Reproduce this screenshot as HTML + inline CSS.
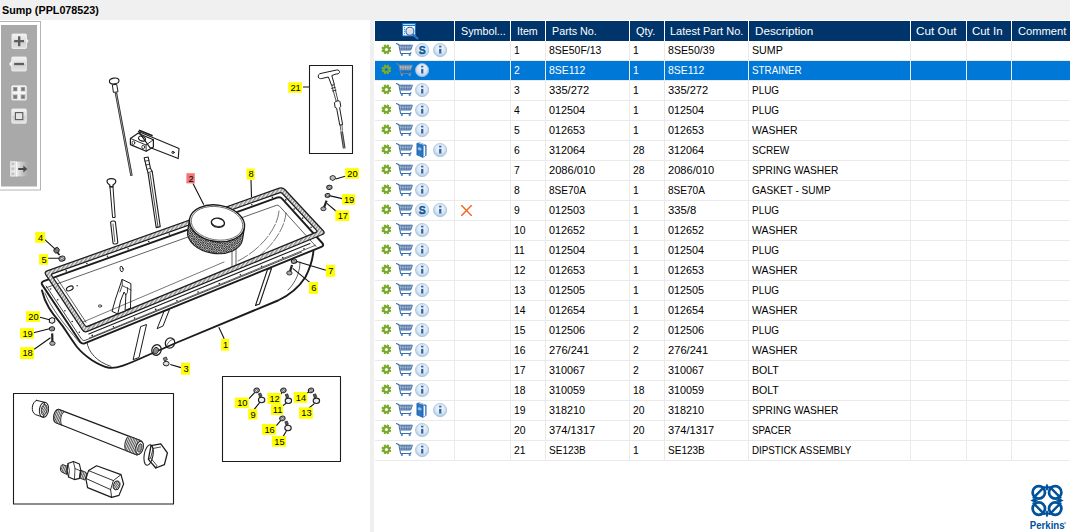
<!DOCTYPE html>
<html><head><meta charset="utf-8"><title>Sump (PPL078523)</title>
<style>
html,body{margin:0;padding:0}
body{width:1070px;height:532px;background:#f0f0f0;position:relative;overflow:hidden;font-family:"Liberation Sans",sans-serif;font-size:11px;color:#000}
.abs{position:absolute}
#title{left:2px;top:3px;font-weight:bold;font-size:11px;line-height:14px;white-space:nowrap;transform:scaleX(.978);transform-origin:0 50%}
#lp{left:0;top:20px;width:370px;height:512px;background:#fff}
#rp{left:374px;top:20px;width:696px;height:512px;background:#fff}
#hd{left:375px;top:21px;width:695px;height:20px;background:#00356b}
.hs{position:absolute;top:21px;width:1px;height:20px;background:#fff}
.ht{position:absolute;top:21px;height:20px;line-height:20px;color:#fff;font-size:11.5px;white-space:nowrap;transform-origin:0 50%}
.vs{position:absolute;top:41px;width:1px;height:420px;background:#eaeaea}
.hl{position:absolute;left:375px;width:695px;height:1px;background:#eaeaea}
.row{position:absolute;left:375px;width:695px;height:19px}
.sel{background:#0078d7;color:#fff}
.c{position:absolute;top:0;height:19px;line-height:19px;white-space:nowrap;font-size:11px}
.d{display:inline-block;transform-origin:0 50%}
.ic{position:absolute}
</style></head><body>
<div id="title" class="abs">Sump (PPL078523)</div>
<div id="lp" class="abs"></div>
<div id="rp" class="abs"></div>
<svg width="0" height="0" style="position:absolute">
<defs>
<radialGradient id="gi" cx="50%" cy="40%" r="60%"><stop offset="0" stop-color="#f4f8fc"/><stop offset=".55" stop-color="#dde9f4"/><stop offset="1" stop-color="#a9c6e2"/></radialGradient>
<linearGradient id="gb" x1="0" y1="0" x2="1" y2="0"><stop offset="0" stop-color="#2468b4"/><stop offset=".5" stop-color="#2f7bc6"/><stop offset="1" stop-color="#2269b6"/></linearGradient>
<symbol id="gear" viewBox="-5.5 -5.5 11 11">
<g fill="#7aab2c" transform="rotate(22.5)"><circle r="3.7"/>
<rect x="-1.2" y="-5.1" width="2.4" height="10.2" rx=".7"/>
<rect x="-1.2" y="-5.1" width="2.4" height="10.2" rx=".7" transform="rotate(45)"/>
<rect x="-1.2" y="-5.1" width="2.4" height="10.2" rx=".7" transform="rotate(90)"/>
<rect x="-1.2" y="-5.1" width="2.4" height="10.2" rx=".7" transform="rotate(135)"/></g>
<circle r="1.55" fill="#fff"/>
</symbol>
<symbol id="gearsel" viewBox="-5.5 -5.5 11 11">
<g fill="#7aab2c" transform="rotate(22.5)"><circle r="3.7"/>
<rect x="-1.2" y="-5.1" width="2.4" height="10.2" rx=".7"/>
<rect x="-1.2" y="-5.1" width="2.4" height="10.2" rx=".7" transform="rotate(45)"/>
<rect x="-1.2" y="-5.1" width="2.4" height="10.2" rx=".7" transform="rotate(90)"/>
<rect x="-1.2" y="-5.1" width="2.4" height="10.2" rx=".7" transform="rotate(135)"/></g>
<circle r="1.55" fill="#0078d7"/>
</symbol>
<symbol id="cart" viewBox="0 0 17 14">
<g fill="none" stroke="#3f6aa3" stroke-linecap="round" stroke-linejoin="round">
<path d="M0.5 0.5 L2.9 1.7 L4.6 10.5 L14.7 10.5 L14.9 9.6" stroke-width="1.1"/>
<path d="M3.3 2.2 L16.4 2.2 L14.8 6.9 L4.6 6.9" stroke-width="1" fill="#e6edf6"/>
<path d="M5.3 2.4V6.9M7 2.4V6.9M8.7 2.4V6.9M10.4 2.4V6.9M12.1 2.4V6.9M13.8 2.4V6.9M3.6 3.8H15M3.9 5.4H14.5" stroke-width=".65"/>
</g>
<circle cx="5.9" cy="12" r="1.15" fill="#4f92da"/><circle cx="13.7" cy="12" r="1.15" fill="#4f92da"/>
</symbol>
<symbol id="cartsel" viewBox="0 0 17 14">
<g fill="none" stroke="#6c7f97" stroke-linecap="round" stroke-linejoin="round">
<path d="M0.5 0.5 L2.9 1.7 L4.6 10.5 L14.7 10.5 L14.9 9.6" stroke-width="1.1"/>
<path d="M3.3 2.2 L16.4 2.2 L14.8 6.9 L4.6 6.9" stroke-width="1" fill="#dfe6ee"/>
<path d="M5.3 2.4V6.9M7 2.4V6.9M8.7 2.4V6.9M10.4 2.4V6.9M12.1 2.4V6.9M13.8 2.4V6.9M3.6 3.8H15M3.9 5.4H14.5" stroke-width=".65"/>
</g>
<circle cx="5.9" cy="12" r="1.15" fill="#8394aa"/><circle cx="13.7" cy="12" r="1.15" fill="#8394aa"/>
</symbol>
<symbol id="info" viewBox="0 0 15 15">
<circle cx="7.5" cy="7.5" r="7" fill="url(#gi)" stroke="#a4c1de" stroke-width=".8"/>
<rect x="6.45" y="6.2" width="2.4" height="4.9" fill="#3263a6"/><rect x="6.45" y="2.9" width="2.4" height="1.8" fill="#3263a6"/>
</symbol>
<symbol id="sic" viewBox="0 0 15 15">
<circle cx="7.5" cy="7.5" r="7" fill="url(#gi)" stroke="#a4c1de" stroke-width=".8"/>
<text x="7.5" y="11.5" text-anchor="middle" font-family="Liberation Sans, sans-serif" font-weight="bold" font-size="11" fill="#0b5a98" stroke="#0b5a98" stroke-width=".45">S</text>
</symbol>
<symbol id="book" viewBox="0 0 11 16">
<path d="M0.7 1.2 L3.2 0.2 L10.5 3 L10.5 13.2 L7 15.8 L0.7 13.1 Z" fill="#1f66b2"/>
<path d="M0.7 1.2 L7 2.8 L7 15.8 L0.7 13.1 Z" fill="url(#gb)"/>
<path d="M7.5 3.3 L9.3 3.9 L9.3 13.5 L7.5 15 Z" fill="#f4f8fc"/>
<path d="M1.6 1 L3.3 0.4 L9.6 2.8 L7.4 2.7 Z" fill="#e8f0f9" opacity=".9"/>
<ellipse cx="3.7" cy="6.9" rx="2" ry="1.5" fill="#a9c9ea" opacity=".85" transform="rotate(12 3.7 6.9)"/>
</symbol>
<symbol id="xic" viewBox="0 0 11 11">
<path d="M0.6 0.6 L10.4 10.4 M10.4 0.6 L0.6 10.4" stroke="#f0671f" stroke-width="1.4" fill="none" stroke-linecap="round"/>
</symbol>
</defs></svg>
<div id="hd" class="abs"></div>
<div class="hs" style="left:454px"></div><div class="hs" style="left:510px"></div><div class="hs" style="left:545px"></div><div class="hs" style="left:629px"></div><div class="hs" style="left:664px"></div><div class="hs" style="left:748px"></div><div class="hs" style="left:910px"></div><div class="hs" style="left:966px"></div><div class="hs" style="left:1011px"></div>
<div class="ht" style="left:461px;transform:scaleX(0.933)">Symbol...</div><div class="ht" style="left:517px;transform:scaleX(0.926)">Item</div><div class="ht" style="left:551.5px;transform:scaleX(0.935)">Parts No.</div><div class="ht" style="left:635.5px;transform:scaleX(0.949)">Qty.</div><div class="ht" style="left:670.3px;transform:scaleX(0.956)">Latest Part No.</div><div class="ht" style="left:754.5px;transform:scaleX(1.014)">Description</div><div class="ht" style="left:916.4px;transform:scaleX(1.02)">Cut Out</div><div class="ht" style="left:972.4px;transform:scaleX(0.994)">Cut In</div><div class="ht" style="left:1017.6px;transform:scaleX(0.969)">Comment</div>
<svg class="abs" style="left:401px;top:22px" width="18" height="18" viewBox="401 22 18 18">
<rect x="402.1" y="23.1" width="13.8" height="13.2" fill="#1878d2"/>
<rect x="403.1" y="26" width="11.8" height="9.4" fill="#fff"/>
<rect x="403.2" y="24.1" width="11.6" height=".9" fill="#d6e9fb"/>
<path d="M404.6 27.2v7.6" stroke="#1878d2" stroke-width="1" stroke-dasharray="1 1"/>
<path d="M412.6 34.2 L417.5 38.5" stroke="#2f74c0" stroke-width="2.2" stroke-linecap="round"/>
<circle cx="409.9" cy="31.2" r="4" fill="#dedede" stroke="#2a6cb8" stroke-width="1.1"/>
<path d="M407.6 30.2a2.6 2.6 0 0 1 4-1.2" stroke="#f6f6f6" stroke-width=".9" fill="none"/>
</svg>
<div class="row" style="top:41px"><svg class="ic" style="left:5.5px;top:3.4px" width="10.8" height="10.8"><use href="#gear"/></svg><svg class="ic" style="left:20.6px;top:2.2px" width="17" height="14"><use href="#cart"/></svg><svg class="ic" style="left:39.7px;top:2.4px" width="14.2" height="14.2"><use href="#sic"/></svg><svg class="ic" style="left:57.7px;top:2.4px" width="14.2" height="14.2"><use href="#info"/></svg><span class="c" style="left:139.39999999999998px"><span class="d" style="transform:scaleX(.94)">1</span></span><span class="c" style="left:174.39999999999998px"><span class="d" style="transform:scaleX(0.95)">8SE50F/13</span></span><span class="c" style="left:258.29999999999995px"><span class="d" style="transform:scaleX(.94)">1</span></span><span class="c" style="left:293.4px"><span class="d" style="transform:scaleX(0.963)">8SE50/39</span></span><span class="c" style="left:377.4px"><span class="d" style="transform:scaleX(0.969)">SUMP</span></span></div>
<div class="hl" style="top:60px"></div>
<div class="row sel" style="top:61px"><svg class="ic" style="left:5.5px;top:3.4px" width="10.8" height="10.8"><use href="#gearsel"/></svg><svg class="ic" style="left:20.6px;top:2.2px" width="17" height="14"><use href="#cartsel"/></svg><svg class="ic" style="left:39.7px;top:2.4px" width="14.2" height="14.2"><use href="#info"/></svg><span class="c" style="left:139.39999999999998px"><span class="d" style="transform:scaleX(.94)">2</span></span><span class="c" style="left:174.39999999999998px"><span class="d" style="transform:scaleX(0.948)">8SE112</span></span><span class="c" style="left:258.29999999999995px"><span class="d" style="transform:scaleX(.94)">1</span></span><span class="c" style="left:293.4px"><span class="d" style="transform:scaleX(0.948)">8SE112</span></span><span class="c" style="left:377.4px"><span class="d" style="transform:scaleX(0.894)">STRAINER</span></span></div>
<div class="hl" style="top:80px"></div>
<div class="row" style="top:81px"><svg class="ic" style="left:5.5px;top:3.4px" width="10.8" height="10.8"><use href="#gear"/></svg><svg class="ic" style="left:20.6px;top:2.2px" width="17" height="14"><use href="#cart"/></svg><svg class="ic" style="left:39.7px;top:2.4px" width="14.2" height="14.2"><use href="#info"/></svg><span class="c" style="left:139.39999999999998px"><span class="d" style="transform:scaleX(.94)">3</span></span><span class="c" style="left:174.39999999999998px"><span class="d" style="transform:scaleX(1.012)">335/272</span></span><span class="c" style="left:258.29999999999995px"><span class="d" style="transform:scaleX(.94)">1</span></span><span class="c" style="left:293.4px"><span class="d" style="transform:scaleX(1.012)">335/272</span></span><span class="c" style="left:377.4px"><span class="d" style="transform:scaleX(0.903)">PLUG</span></span></div>
<div class="hl" style="top:100px"></div>
<div class="row" style="top:101px"><svg class="ic" style="left:5.5px;top:3.4px" width="10.8" height="10.8"><use href="#gear"/></svg><svg class="ic" style="left:20.6px;top:2.2px" width="17" height="14"><use href="#cart"/></svg><svg class="ic" style="left:39.7px;top:2.4px" width="14.2" height="14.2"><use href="#info"/></svg><span class="c" style="left:139.39999999999998px"><span class="d" style="transform:scaleX(.94)">4</span></span><span class="c" style="left:174.39999999999998px"><span class="d" style="transform:scaleX(0.982)">012504</span></span><span class="c" style="left:258.29999999999995px"><span class="d" style="transform:scaleX(.94)">1</span></span><span class="c" style="left:293.4px"><span class="d" style="transform:scaleX(0.982)">012504</span></span><span class="c" style="left:377.4px"><span class="d" style="transform:scaleX(0.903)">PLUG</span></span></div>
<div class="hl" style="top:120px"></div>
<div class="row" style="top:121px"><svg class="ic" style="left:5.5px;top:3.4px" width="10.8" height="10.8"><use href="#gear"/></svg><svg class="ic" style="left:20.6px;top:2.2px" width="17" height="14"><use href="#cart"/></svg><svg class="ic" style="left:39.7px;top:2.4px" width="14.2" height="14.2"><use href="#info"/></svg><span class="c" style="left:139.39999999999998px"><span class="d" style="transform:scaleX(.94)">5</span></span><span class="c" style="left:174.39999999999998px"><span class="d" style="transform:scaleX(0.982)">012653</span></span><span class="c" style="left:258.29999999999995px"><span class="d" style="transform:scaleX(.94)">1</span></span><span class="c" style="left:293.4px"><span class="d" style="transform:scaleX(0.982)">012653</span></span><span class="c" style="left:377.4px"><span class="d" style="transform:scaleX(0.95)">WASHER</span></span></div>
<div class="hl" style="top:140px"></div>
<div class="row" style="top:141px"><svg class="ic" style="left:5.5px;top:3.4px" width="10.8" height="10.8"><use href="#gear"/></svg><svg class="ic" style="left:20.6px;top:2.2px" width="17" height="14"><use href="#cart"/></svg><svg class="ic" style="left:41.1px;top:.8px" width="11" height="16"><use href="#book"/></svg><svg class="ic" style="left:57.7px;top:2.4px" width="14.2" height="14.2"><use href="#info"/></svg><span class="c" style="left:139.39999999999998px"><span class="d" style="transform:scaleX(.94)">6</span></span><span class="c" style="left:174.39999999999998px"><span class="d" style="transform:scaleX(0.982)">312064</span></span><span class="c" style="left:258.29999999999995px"><span class="d" style="transform:scaleX(.94)">28</span></span><span class="c" style="left:293.4px"><span class="d" style="transform:scaleX(0.982)">312064</span></span><span class="c" style="left:377.4px"><span class="d" style="transform:scaleX(0.91)">SCREW</span></span></div>
<div class="hl" style="top:160px"></div>
<div class="row" style="top:161px"><svg class="ic" style="left:5.5px;top:3.4px" width="10.8" height="10.8"><use href="#gear"/></svg><svg class="ic" style="left:20.6px;top:2.2px" width="17" height="14"><use href="#cart"/></svg><svg class="ic" style="left:39.7px;top:2.4px" width="14.2" height="14.2"><use href="#info"/></svg><span class="c" style="left:139.39999999999998px"><span class="d" style="transform:scaleX(.94)">7</span></span><span class="c" style="left:174.39999999999998px"><span class="d" style="transform:scaleX(1.008)">2086/010</span></span><span class="c" style="left:258.29999999999995px"><span class="d" style="transform:scaleX(.94)">28</span></span><span class="c" style="left:293.4px"><span class="d" style="transform:scaleX(1.008)">2086/010</span></span><span class="c" style="left:377.4px"><span class="d" style="transform:scaleX(0.927)">SPRING WASHER</span></span></div>
<div class="hl" style="top:180px"></div>
<div class="row" style="top:181px"><svg class="ic" style="left:5.5px;top:3.4px" width="10.8" height="10.8"><use href="#gear"/></svg><svg class="ic" style="left:20.6px;top:2.2px" width="17" height="14"><use href="#cart"/></svg><svg class="ic" style="left:39.7px;top:2.4px" width="14.2" height="14.2"><use href="#info"/></svg><span class="c" style="left:139.39999999999998px"><span class="d" style="transform:scaleX(.94)">8</span></span><span class="c" style="left:174.39999999999998px"><span class="d" style="transform:scaleX(0.915)">8SE70A</span></span><span class="c" style="left:258.29999999999995px"><span class="d" style="transform:scaleX(.94)">1</span></span><span class="c" style="left:293.4px"><span class="d" style="transform:scaleX(0.915)">8SE70A</span></span><span class="c" style="left:377.4px"><span class="d" style="transform:scaleX(0.914)">GASKET - SUMP</span></span></div>
<div class="hl" style="top:200px"></div>
<div class="row" style="top:201px"><svg class="ic" style="left:5.5px;top:3.4px" width="10.8" height="10.8"><use href="#gear"/></svg><svg class="ic" style="left:20.6px;top:2.2px" width="17" height="14"><use href="#cart"/></svg><svg class="ic" style="left:39.7px;top:2.4px" width="14.2" height="14.2"><use href="#sic"/></svg><svg class="ic" style="left:57.7px;top:2.4px" width="14.2" height="14.2"><use href="#info"/></svg><svg class="ic" style="left:85.5px;top:4px" width="11" height="11"><use href="#xic"/></svg><span class="c" style="left:139.39999999999998px"><span class="d" style="transform:scaleX(.94)">9</span></span><span class="c" style="left:174.39999999999998px"><span class="d" style="transform:scaleX(0.982)">012503</span></span><span class="c" style="left:258.29999999999995px"><span class="d" style="transform:scaleX(.94)">1</span></span><span class="c" style="left:293.4px"><span class="d" style="transform:scaleX(1.025)">335/8</span></span><span class="c" style="left:377.4px"><span class="d" style="transform:scaleX(0.903)">PLUG</span></span></div>
<div class="hl" style="top:220px"></div>
<div class="row" style="top:221px"><svg class="ic" style="left:5.5px;top:3.4px" width="10.8" height="10.8"><use href="#gear"/></svg><svg class="ic" style="left:20.6px;top:2.2px" width="17" height="14"><use href="#cart"/></svg><svg class="ic" style="left:39.7px;top:2.4px" width="14.2" height="14.2"><use href="#info"/></svg><span class="c" style="left:139.39999999999998px"><span class="d" style="transform:scaleX(.94)">10</span></span><span class="c" style="left:174.39999999999998px"><span class="d" style="transform:scaleX(0.982)">012652</span></span><span class="c" style="left:258.29999999999995px"><span class="d" style="transform:scaleX(.94)">1</span></span><span class="c" style="left:293.4px"><span class="d" style="transform:scaleX(0.982)">012652</span></span><span class="c" style="left:377.4px"><span class="d" style="transform:scaleX(0.95)">WASHER</span></span></div>
<div class="hl" style="top:240px"></div>
<div class="row" style="top:241px"><svg class="ic" style="left:5.5px;top:3.4px" width="10.8" height="10.8"><use href="#gear"/></svg><svg class="ic" style="left:20.6px;top:2.2px" width="17" height="14"><use href="#cart"/></svg><svg class="ic" style="left:39.7px;top:2.4px" width="14.2" height="14.2"><use href="#info"/></svg><span class="c" style="left:139.39999999999998px"><span class="d" style="transform:scaleX(.94)">11</span></span><span class="c" style="left:174.39999999999998px"><span class="d" style="transform:scaleX(0.982)">012504</span></span><span class="c" style="left:258.29999999999995px"><span class="d" style="transform:scaleX(.94)">1</span></span><span class="c" style="left:293.4px"><span class="d" style="transform:scaleX(0.982)">012504</span></span><span class="c" style="left:377.4px"><span class="d" style="transform:scaleX(0.903)">PLUG</span></span></div>
<div class="hl" style="top:260px"></div>
<div class="row" style="top:261px"><svg class="ic" style="left:5.5px;top:3.4px" width="10.8" height="10.8"><use href="#gear"/></svg><svg class="ic" style="left:20.6px;top:2.2px" width="17" height="14"><use href="#cart"/></svg><svg class="ic" style="left:39.7px;top:2.4px" width="14.2" height="14.2"><use href="#info"/></svg><span class="c" style="left:139.39999999999998px"><span class="d" style="transform:scaleX(.94)">12</span></span><span class="c" style="left:174.39999999999998px"><span class="d" style="transform:scaleX(0.982)">012653</span></span><span class="c" style="left:258.29999999999995px"><span class="d" style="transform:scaleX(.94)">1</span></span><span class="c" style="left:293.4px"><span class="d" style="transform:scaleX(0.982)">012653</span></span><span class="c" style="left:377.4px"><span class="d" style="transform:scaleX(0.95)">WASHER</span></span></div>
<div class="hl" style="top:280px"></div>
<div class="row" style="top:281px"><svg class="ic" style="left:5.5px;top:3.4px" width="10.8" height="10.8"><use href="#gear"/></svg><svg class="ic" style="left:20.6px;top:2.2px" width="17" height="14"><use href="#cart"/></svg><svg class="ic" style="left:39.7px;top:2.4px" width="14.2" height="14.2"><use href="#info"/></svg><span class="c" style="left:139.39999999999998px"><span class="d" style="transform:scaleX(.94)">13</span></span><span class="c" style="left:174.39999999999998px"><span class="d" style="transform:scaleX(0.982)">012505</span></span><span class="c" style="left:258.29999999999995px"><span class="d" style="transform:scaleX(.94)">1</span></span><span class="c" style="left:293.4px"><span class="d" style="transform:scaleX(0.982)">012505</span></span><span class="c" style="left:377.4px"><span class="d" style="transform:scaleX(0.903)">PLUG</span></span></div>
<div class="hl" style="top:300px"></div>
<div class="row" style="top:301px"><svg class="ic" style="left:5.5px;top:3.4px" width="10.8" height="10.8"><use href="#gear"/></svg><svg class="ic" style="left:20.6px;top:2.2px" width="17" height="14"><use href="#cart"/></svg><svg class="ic" style="left:39.7px;top:2.4px" width="14.2" height="14.2"><use href="#info"/></svg><span class="c" style="left:139.39999999999998px"><span class="d" style="transform:scaleX(.94)">14</span></span><span class="c" style="left:174.39999999999998px"><span class="d" style="transform:scaleX(0.982)">012654</span></span><span class="c" style="left:258.29999999999995px"><span class="d" style="transform:scaleX(.94)">1</span></span><span class="c" style="left:293.4px"><span class="d" style="transform:scaleX(0.982)">012654</span></span><span class="c" style="left:377.4px"><span class="d" style="transform:scaleX(0.95)">WASHER</span></span></div>
<div class="hl" style="top:320px"></div>
<div class="row" style="top:321px"><svg class="ic" style="left:5.5px;top:3.4px" width="10.8" height="10.8"><use href="#gear"/></svg><svg class="ic" style="left:20.6px;top:2.2px" width="17" height="14"><use href="#cart"/></svg><svg class="ic" style="left:39.7px;top:2.4px" width="14.2" height="14.2"><use href="#info"/></svg><span class="c" style="left:139.39999999999998px"><span class="d" style="transform:scaleX(.94)">15</span></span><span class="c" style="left:174.39999999999998px"><span class="d" style="transform:scaleX(0.982)">012506</span></span><span class="c" style="left:258.29999999999995px"><span class="d" style="transform:scaleX(.94)">2</span></span><span class="c" style="left:293.4px"><span class="d" style="transform:scaleX(0.982)">012506</span></span><span class="c" style="left:377.4px"><span class="d" style="transform:scaleX(0.903)">PLUG</span></span></div>
<div class="hl" style="top:340px"></div>
<div class="row" style="top:341px"><svg class="ic" style="left:5.5px;top:3.4px" width="10.8" height="10.8"><use href="#gear"/></svg><svg class="ic" style="left:20.6px;top:2.2px" width="17" height="14"><use href="#cart"/></svg><svg class="ic" style="left:39.7px;top:2.4px" width="14.2" height="14.2"><use href="#info"/></svg><span class="c" style="left:139.39999999999998px"><span class="d" style="transform:scaleX(.94)">16</span></span><span class="c" style="left:174.39999999999998px"><span class="d" style="transform:scaleX(1.012)">276/241</span></span><span class="c" style="left:258.29999999999995px"><span class="d" style="transform:scaleX(.94)">2</span></span><span class="c" style="left:293.4px"><span class="d" style="transform:scaleX(1.012)">276/241</span></span><span class="c" style="left:377.4px"><span class="d" style="transform:scaleX(0.95)">WASHER</span></span></div>
<div class="hl" style="top:360px"></div>
<div class="row" style="top:361px"><svg class="ic" style="left:5.5px;top:3.4px" width="10.8" height="10.8"><use href="#gear"/></svg><svg class="ic" style="left:20.6px;top:2.2px" width="17" height="14"><use href="#cart"/></svg><svg class="ic" style="left:39.7px;top:2.4px" width="14.2" height="14.2"><use href="#info"/></svg><span class="c" style="left:139.39999999999998px"><span class="d" style="transform:scaleX(.94)">17</span></span><span class="c" style="left:174.39999999999998px"><span class="d" style="transform:scaleX(0.982)">310067</span></span><span class="c" style="left:258.29999999999995px"><span class="d" style="transform:scaleX(.94)">2</span></span><span class="c" style="left:293.4px"><span class="d" style="transform:scaleX(0.982)">310067</span></span><span class="c" style="left:377.4px"><span class="d" style="transform:scaleX(0.961)">BOLT</span></span></div>
<div class="hl" style="top:380px"></div>
<div class="row" style="top:381px"><svg class="ic" style="left:5.5px;top:3.4px" width="10.8" height="10.8"><use href="#gear"/></svg><svg class="ic" style="left:20.6px;top:2.2px" width="17" height="14"><use href="#cart"/></svg><svg class="ic" style="left:39.7px;top:2.4px" width="14.2" height="14.2"><use href="#info"/></svg><span class="c" style="left:139.39999999999998px"><span class="d" style="transform:scaleX(.94)">18</span></span><span class="c" style="left:174.39999999999998px"><span class="d" style="transform:scaleX(0.982)">310059</span></span><span class="c" style="left:258.29999999999995px"><span class="d" style="transform:scaleX(.94)">18</span></span><span class="c" style="left:293.4px"><span class="d" style="transform:scaleX(0.982)">310059</span></span><span class="c" style="left:377.4px"><span class="d" style="transform:scaleX(0.961)">BOLT</span></span></div>
<div class="hl" style="top:400px"></div>
<div class="row" style="top:401px"><svg class="ic" style="left:5.5px;top:3.4px" width="10.8" height="10.8"><use href="#gear"/></svg><svg class="ic" style="left:20.6px;top:2.2px" width="17" height="14"><use href="#cart"/></svg><svg class="ic" style="left:41.1px;top:.8px" width="11" height="16"><use href="#book"/></svg><svg class="ic" style="left:57.7px;top:2.4px" width="14.2" height="14.2"><use href="#info"/></svg><span class="c" style="left:139.39999999999998px"><span class="d" style="transform:scaleX(.94)">19</span></span><span class="c" style="left:174.39999999999998px"><span class="d" style="transform:scaleX(0.982)">318210</span></span><span class="c" style="left:258.29999999999995px"><span class="d" style="transform:scaleX(.94)">20</span></span><span class="c" style="left:293.4px"><span class="d" style="transform:scaleX(0.982)">318210</span></span><span class="c" style="left:377.4px"><span class="d" style="transform:scaleX(0.927)">SPRING WASHER</span></span></div>
<div class="hl" style="top:420px"></div>
<div class="row" style="top:421px"><svg class="ic" style="left:5.5px;top:3.4px" width="10.8" height="10.8"><use href="#gear"/></svg><svg class="ic" style="left:20.6px;top:2.2px" width="17" height="14"><use href="#cart"/></svg><svg class="ic" style="left:39.7px;top:2.4px" width="14.2" height="14.2"><use href="#info"/></svg><span class="c" style="left:139.39999999999998px"><span class="d" style="transform:scaleX(.94)">20</span></span><span class="c" style="left:174.39999999999998px"><span class="d" style="transform:scaleX(1.008)">374/1317</span></span><span class="c" style="left:258.29999999999995px"><span class="d" style="transform:scaleX(.94)">20</span></span><span class="c" style="left:293.4px"><span class="d" style="transform:scaleX(1.008)">374/1317</span></span><span class="c" style="left:377.4px"><span class="d" style="transform:scaleX(0.885)">SPACER</span></span></div>
<div class="hl" style="top:440px"></div>
<div class="row" style="top:441px"><svg class="ic" style="left:5.5px;top:3.4px" width="10.8" height="10.8"><use href="#gear"/></svg><svg class="ic" style="left:20.6px;top:2.2px" width="17" height="14"><use href="#cart"/></svg><svg class="ic" style="left:39.7px;top:2.4px" width="14.2" height="14.2"><use href="#info"/></svg><span class="c" style="left:139.39999999999998px"><span class="d" style="transform:scaleX(.94)">21</span></span><span class="c" style="left:174.39999999999998px"><span class="d" style="transform:scaleX(0.912)">SE123B</span></span><span class="c" style="left:258.29999999999995px"><span class="d" style="transform:scaleX(.94)">1</span></span><span class="c" style="left:293.4px"><span class="d" style="transform:scaleX(0.912)">SE123B</span></span><span class="c" style="left:377.4px"><span class="d" style="transform:scaleX(0.89)">DIPSTICK ASSEMBLY</span></span></div>
<div class="hl" style="top:460px"></div>
<div class="vs" style="left:454px"></div><div class="vs" style="left:510px"></div><div class="vs" style="left:545px"></div><div class="vs" style="left:629px"></div><div class="vs" style="left:664px"></div><div class="vs" style="left:748px"></div><div class="vs" style="left:910px"></div><div class="vs" style="left:966px"></div><div class="vs" style="left:1011px"></div>
<div class="abs" style="left:454px;top:61px;width:1px;height:19px;background:#ececec"></div><div class="abs" style="left:510px;top:61px;width:1px;height:19px;background:#ececec"></div><div class="abs" style="left:545px;top:61px;width:1px;height:19px;background:#ececec"></div><div class="abs" style="left:629px;top:61px;width:1px;height:19px;background:#ececec"></div><div class="abs" style="left:664px;top:61px;width:1px;height:19px;background:#ececec"></div><div class="abs" style="left:748px;top:61px;width:1px;height:19px;background:#ececec"></div><div class="abs" style="left:910px;top:61px;width:1px;height:19px;background:#ececec"></div><div class="abs" style="left:966px;top:61px;width:1px;height:19px;background:#ececec"></div><div class="abs" style="left:1011px;top:61px;width:1px;height:19px;background:#ececec"></div>
<svg class="abs" style="left:0;top:20px" width="370" height="512" viewBox="0 20 370 512" font-family="Liberation Sans, sans-serif">
<defs>
<pattern id="kn" width="2.4" height="2.4" patternUnits="userSpaceOnUse"><rect width="2.4" height="2.4" fill="#9a9a9a"/><path d="M0 0L2.4 2.4M2.4 0L0 2.4" stroke="#222" stroke-width=".7"/><circle cx="1.2" cy="0" r=".5" fill="#f4f4f4"/><circle cx="0" cy="1.2" r=".5" fill="#f4f4f4"/><circle cx="2.4" cy="1.2" r=".5" fill="#f4f4f4"/><circle cx="1.2" cy="2.4" r=".5" fill="#f4f4f4"/></pattern>
<pattern id="gk" width="2.8" height="6" patternUnits="userSpaceOnUse" patternTransform="rotate(35)"><rect width="2.8" height="6" fill="#f0f0f0"/><path d="M.8 0V6" stroke="#444" stroke-width=".85"/></pattern>
<pattern id="th" width="1.6" height="4" patternUnits="userSpaceOnUse" patternTransform="rotate(20)"><rect width="1.6" height="4" fill="#ddd"/><path d="M.4 0V4" stroke="#333" stroke-width=".7"/></pattern>
</defs>
<path d="M42 290.5 C43.5 297 46 303 48.8 307.6 C52 313 55 316.6 58.2 320.4 C60 322.6 61.4 324.4 62.9 326.4 C67.6 333.4 72 340.4 77 347 C81.6 352.6 86.6 356.6 92 360.2 C98 364 103 366.6 109 367.7 C117 368.8 126 365 146 356 L177 342.5 L278 300.5 C292 294 301 284 305.5 277 C310 268 313 258 313.5 250" stroke="#1c1c1c" fill="none" stroke-linejoin="round" stroke-linecap="round" stroke-width="1.9" fill="#fff"/>
<path d="M87 342 C88 352 97 362 111 366.4" stroke="#1c1c1c" fill="none" stroke-linejoin="round" stroke-linecap="round" stroke-width=".8"/>
<path d="M45 293 C50 306 62 322 80 343" stroke="#1c1c1c" fill="none" stroke-linejoin="round" stroke-linecap="round" stroke-width=".7"/>
<path d="M300 262 C300 272 296 282 288 290" stroke="#1c1c1c" fill="none" stroke-linejoin="round" stroke-linecap="round" stroke-width=".7"/>
<path d="M42.4 285.1Q40.5 282.3 43.7 281.2L277.0 197.7Q280.2 196.5 282.5 199.1L322.2 243.0Q324.5 245.5 321.4 246.8L85.1 343.2Q82.0 344.5 80.1 341.7Z" fill="#fff" stroke="#1c1c1c" stroke-linejoin="round" stroke-width="1.9"/>
<path d="M46.2 286.1L81.6 339.2Q83.0 341.3 85.3 340.3L301.6 252.1" stroke="#1c1c1c" fill="none" stroke-linejoin="round" stroke-linecap="round" stroke-width=".8"/>
<path d="M89.4 337.9 L315.4 245.3" stroke="#1c1c1c" fill="none" stroke-linejoin="round" stroke-linecap="round" stroke-width=".7"/>
<path d="M88.8 333.9 L309.9 243.4" stroke="#1c1c1c" fill="none" stroke-linejoin="round" stroke-linecap="round" stroke-width="1.1"/>
<path d="M56.6 277.7 L86.0 322.3" stroke="#1c1c1c" fill="none" stroke-linejoin="round" stroke-linecap="round" stroke-width=".7"/>
<path d="M46.6 287.6L276.2 205.4Q278.1 204.7 279.5 206.2L316.0 246.5" stroke="#1c1c1c" fill="none" stroke-linejoin="round" stroke-linecap="round" stroke-width=".7"/>
<path d="M82.6 327.9 L290.6 246.8" stroke="#1c1c1c" fill="none" stroke-linejoin="round" stroke-linecap="round" stroke-width=".6"/>
<path d="M78.6 323.9 L224 262" stroke="#1c1c1c" fill="none" stroke-linejoin="round" stroke-linecap="round" stroke-width=".6"/>
<path d="M57.3 286.9 L81.6 326.9" stroke="#1c1c1c" fill="none" stroke-linejoin="round" stroke-linecap="round" stroke-width=".6"/>
<path d="M286 213 C284 235 262 258 240 268" stroke="#1c1c1c" fill="none" stroke-linejoin="round" stroke-linecap="round" stroke-width=".6" stroke-dasharray="9 2"/>
<path d="M279 211 C277 231 258 251 238 261" stroke="#1c1c1c" fill="none" stroke-linejoin="round" stroke-linecap="round" stroke-width=".6" stroke-dasharray="12 2"/>
<path d="M232 240 V270 M236 240 V268" stroke="#1c1c1c" fill="none" stroke-linejoin="round" stroke-linecap="round" stroke-width=".7"/>
<circle cx="66.2" cy="270.9" r=".8" fill="#222"/>
<circle cx="86.9" cy="263.5" r=".8" fill="#222"/>
<circle cx="107.5" cy="256.2" r=".8" fill="#222"/>
<circle cx="128.1" cy="248.8" r=".8" fill="#222"/>
<circle cx="148.7" cy="241.5" r=".8" fill="#222"/>
<circle cx="169.3" cy="234.1" r=".8" fill="#222"/>
<circle cx="190.0" cy="226.8" r=".8" fill="#222"/>
<circle cx="210.6" cy="219.4" r=".8" fill="#222"/>
<circle cx="231.2" cy="212.1" r=".8" fill="#222"/>
<circle cx="251.8" cy="204.7" r=".8" fill="#222"/>
<circle cx="272.4" cy="197.4" r=".8" fill="#222"/>
<circle cx="285.8" cy="199.9" r=".8" fill="#222"/>
<circle cx="294.2" cy="209.0" r=".8" fill="#222"/>
<circle cx="302.7" cy="218.1" r=".8" fill="#222"/>
<circle cx="311.1" cy="227.2" r=".8" fill="#222"/>
<circle cx="304.0" cy="248.9" r=".8" fill="#222"/>
<circle cx="282.8" cy="257.6" r=".8" fill="#222"/>
<circle cx="261.6" cy="266.2" r=".8" fill="#222"/>
<circle cx="240.4" cy="274.8" r=".8" fill="#222"/>
<circle cx="219.3" cy="283.5" r=".8" fill="#222"/>
<circle cx="198.1" cy="292.1" r=".8" fill="#222"/>
<circle cx="176.9" cy="300.8" r=".8" fill="#222"/>
<circle cx="155.7" cy="309.4" r=".8" fill="#222"/>
<circle cx="134.6" cy="318.1" r=".8" fill="#222"/>
<circle cx="113.4" cy="326.7" r=".8" fill="#222"/>
<circle cx="92.2" cy="335.4" r=".8" fill="#222"/>
<circle cx="79.4" cy="332.3" r=".8" fill="#222"/>
<circle cx="72.2" cy="321.5" r=".8" fill="#222"/>
<circle cx="64.9" cy="310.7" r=".8" fill="#222"/>
<circle cx="57.7" cy="299.8" r=".8" fill="#222"/>
<circle cx="50.5" cy="289.0" r=".8" fill="#222"/>
<path transform="translate(2.5 -1)" d="M109.6 312 L113 300 L117.4 287 L119.6 280.4 L128.4 284.6 L128.4 291 L128 309 L122.6 311.4 L123.4 296 L121.6 293 L118 302 L115.4 314.6 Z" stroke="#1c1c1c" fill="none" stroke-linejoin="round" stroke-linecap="round" stroke-width="1" fill="#fff"/>
<path transform="translate(2.5 -1)" d="M119.6 280.4 L119.8 286.6 L128.4 291 M119.8 286.6 L117.4 293 M123.4 296 L125 293.4 L125 288.6" stroke="#1c1c1c" fill="none" stroke-linejoin="round" stroke-linecap="round" stroke-width=".8"/>
<ellipse cx="121.6" cy="269" rx="1.5" ry="2.8" transform="rotate(-12 121.6 269)" stroke="#1c1c1c" fill="none" stroke-linejoin="round" stroke-linecap="round" stroke-width=".9"/>
<ellipse cx="69.8" cy="288.4" rx="3.6" ry="2.1" transform="rotate(-25 69.8 288.4)" stroke="#1c1c1c" fill="none" stroke-linejoin="round" stroke-linecap="round" stroke-width="1.1" fill="#999"/>
<ellipse cx="100" cy="306" rx="1.6" ry="1.2" stroke="#1c1c1c" fill="none" stroke-linejoin="round" stroke-linecap="round" stroke-width=".8"/><circle cx="77.2" cy="285.8" r=".7" fill="#222"/>
<path d="M141 326.5 L146.5 324.5 L139 357.5 L133.5 359.5 Z" stroke="#1c1c1c" fill="none" stroke-linejoin="round" stroke-linecap="round" stroke-width="1" fill="#fff"/>
<path d="M164.5 311 L169.5 309.5 L163 326 L157.5 328.5 Z" stroke="#1c1c1c" fill="none" stroke-linejoin="round" stroke-linecap="round" stroke-width="1" fill="#fff"/>
<path d="M267.5 269.5 L271.5 268.5 L259.5 304 L255.5 305.5 Z" stroke="#1c1c1c" fill="none" stroke-linejoin="round" stroke-linecap="round" stroke-width="1.1" fill="#8a8a8a"/>
<ellipse cx="156.5" cy="350" rx="4.6" ry="5.4" transform="rotate(25 156.5 350)" stroke="#1c1c1c" fill="none" stroke-linejoin="round" stroke-linecap="round" stroke-width="1.2" fill="#fff"/><ellipse cx="155.8" cy="350.6" rx="2.6" ry="3.4" transform="rotate(25 155.8 350.6)" fill="#888" stroke="#222" stroke-width=".8"/>
<ellipse cx="170" cy="343" rx="4.6" ry="5.2" transform="rotate(25 170 343)" stroke="#1c1c1c" fill="none" stroke-linejoin="round" stroke-linecap="round" stroke-width="1.2" fill="#fff"/><path d="M166.5 346 C168 342 171 339 174 339.5" stroke="#1c1c1c" fill="none" stroke-linejoin="round" stroke-linecap="round" stroke-width=".7"/>
<path d="M163.2 358.2 l3 -1.2 l1.2 2.6 l-3 1.4 z" fill="#888" stroke="#222" stroke-width=".8"/><ellipse cx="166.2" cy="363.6" rx="2.9" ry="2.3" fill="#ddd" stroke="#222" stroke-width="1"/>
<path d="M45.9 274.8Q44.0 272.0 47.2 270.9L279.3 188.1Q282.5 187.0 284.8 189.5L323.2 230.7Q325.5 233.2 322.4 234.5L87.4 331.4Q84.3 332.7 82.4 329.9Z M52.0 276.0Q50.9 274.3 52.8 273.6L279.3 192.9Q281.2 192.2 282.6 193.7L316.4 230.1Q317.8 231.5 315.9 232.3L87.9 326.4Q86.0 327.1 84.9 325.5Z" fill="url(#gk)" fill-rule="evenodd" stroke="#1c1c1c" stroke-width="1.25" stroke-linejoin="round"/>
<g transform="rotate(9 217 223.3)">
<path d="M189.2 223.3 L189.2 235.3 A27.8 18.2 0 0 0 244.8 235.3 L244.8 223.3 Z" fill="url(#kn)" stroke="#1c1c1c" stroke-width="1.1"/>
<ellipse cx="217" cy="223.3" rx="27.8" ry="18.2" fill="#fff" stroke="#1c1c1c" stroke-width="1.4"/>
<ellipse cx="217" cy="223.3" rx="26" ry="16.6" fill="none" stroke="#1c1c1c" stroke-width=".6"/>
<ellipse cx="217.8" cy="222.6" rx="6.6" ry="4.5" fill="#fff" stroke="#1c1c1c" stroke-width="1.4"/>
<path d="M212.6 224.4 A6 3.6 0 0 0 223.4 224.2" stroke="#1c1c1c" fill="none" stroke-linejoin="round" stroke-linecap="round" stroke-width=".7"/>
</g>
<ellipse cx="114.2" cy="81" rx="4.8" ry="2.9" transform="rotate(-8 114.2 81)" stroke="#1c1c1c" fill="none" stroke-linejoin="round" stroke-linecap="round" stroke-width="1.1" fill="#fff"/>
<path d="M112.4 85.2 L113.4 92.4 L118 91.8 L116.8 84.8 Z" stroke="#1c1c1c" fill="none" stroke-linejoin="round" stroke-linecap="round" stroke-width="1" fill="#fff"/>
<path d="M115.9 92.6 L131.5 175.8" stroke="#222" stroke-width="2.4" fill="none"/><path d="M116 93.4 L131.3 175" stroke="#ccc" stroke-width=".7" fill="none"/>
<path d="M138.4 131.4 L179 148.4 L178.2 158.6 L150 147.6 Z" stroke="#1c1c1c" fill="none" stroke-linejoin="round" stroke-linecap="round" stroke-width="1.1" fill="#fff"/>
<path d="M139.6 130.4 L152 135.6" stroke="#1c1c1c" fill="none" stroke-linejoin="round" stroke-linecap="round" stroke-width="1.6"/>
<path d="M130.4 138.4 L138 133.2 L153.4 139.8 L153.4 147 L146.2 151.2 L130.4 144.6 Z" stroke="#1c1c1c" fill="none" stroke-linejoin="round" stroke-linecap="round" stroke-width="1.2" fill="#fff"/>
<path d="M130.4 138.4 L146 145 L153.4 139.8 M146 145 L146.2 151.2" stroke="#1c1c1c" fill="none" stroke-linejoin="round" stroke-linecap="round" stroke-width=".9"/>
<ellipse cx="142" cy="138.6" rx="3.6" ry="2.3" transform="rotate(20 142 138.6)" stroke="#1c1c1c" fill="none" stroke-linejoin="round" stroke-linecap="round" stroke-width="1"/><path d="M139 139 C140 141.4 144 142 145.4 140.4" stroke="#1c1c1c" fill="none" stroke-linejoin="round" stroke-linecap="round" stroke-width=".7"/>
<ellipse cx="133.4" cy="142.8" rx="1.4" ry="1.8" stroke="#1c1c1c" fill="none" stroke-linejoin="round" stroke-linecap="round" stroke-width=".8"/><ellipse cx="143.2" cy="147" rx="1.4" ry="1.8" stroke="#1c1c1c" fill="none" stroke-linejoin="round" stroke-linecap="round" stroke-width=".8"/>
<ellipse cx="173" cy="152.4" rx="1.2" ry="1" stroke="#1c1c1c" fill="none" stroke-linejoin="round" stroke-linecap="round" stroke-width="1" fill="#555"/>
<path d="M144.2 157.8 L148.2 157 L150.4 168.2 L152.2 171.4 L160.2 226.6 L156.2 227.6 L148 172.6 L147 169.4 Z" stroke="#1c1c1c" fill="none" stroke-linejoin="round" stroke-linecap="round" stroke-width="1.1" fill="#fff"/>
<path d="M145 161.2 L148.8 160.4 M145.8 165 L149.6 164.2 M147 169.4 L150.4 168.2 M148 172.6 L152.2 171.4 M150 173.4 L158 226.8" stroke="#1c1c1c" fill="none" stroke-linejoin="round" stroke-linecap="round" stroke-width=".8"/>
<path d="M107 181.6 C107 177.6 115.8 177.6 115.8 181.6 C115.8 183.4 113.6 184.4 113 185 L113 187 L109.8 187 L109.8 185 C109 184.4 107 183.4 107 181.6 Z" stroke="#1c1c1c" fill="none" stroke-linejoin="round" stroke-linecap="round" stroke-width="1.2" fill="#eee"/>
<path d="M110 187 L112.6 217.6 L115.2 217.4 L113 187 Z" stroke="#1c1c1c" fill="none" stroke-linejoin="round" stroke-linecap="round" stroke-width="1" fill="#bbb"/>
<path d="M110.6 222.4 C110.8 220.8 115 220.4 115.4 222 L117.8 242.4 C117.6 244.2 113.4 244.6 113 243 Z" stroke="#1c1c1c" fill="none" stroke-linejoin="round" stroke-linecap="round" stroke-width="1.1" fill="#fff"/><path d="M113 224 L114.8 241.6" stroke="#1c1c1c" fill="none" stroke-linejoin="round" stroke-linecap="round" stroke-width=".7"/>
<path d="M54.4 248.6 l3 -1.4 l2 2.4 l-.8 2.6 l-3 1 l-1.8 -2.2 z" fill="#777" stroke="#222" stroke-width="1"/><path d="M57.6 252.8 l2 2.2" stroke="#222" stroke-width="1.8"/>
<ellipse cx="62" cy="258.6" rx="3.1" ry="2.5" transform="rotate(-15 62 258.6)" fill="#bbb" stroke="#222" stroke-width="1"/><ellipse cx="62" cy="258.6" rx="1.2" ry="1.0" transform="rotate(-15 62 258.6)" fill="#fff" stroke="#222" stroke-width=".5"/>
<path d="M330.2 176.6 l2.6 -1.2 l2.4 1.2 l.2 2.4 l-2.6 1.6 l-2.6 -1.4 z" fill="#bbb" stroke="#222" stroke-width=".9"/>
<ellipse cx="329.4" cy="187.4" rx="2.7" ry="2.1" transform="rotate(-10 329.4 187.4)" fill="#bbb" stroke="#222" stroke-width="1"/><ellipse cx="329.4" cy="187.4" rx="1.1" ry="0.8" transform="rotate(-10 329.4 187.4)" fill="#fff" stroke="#222" stroke-width=".5"/>
<ellipse cx="327.6" cy="195.4" rx="2.5" ry="1.9" transform="rotate(-10 327.6 195.4)" fill="#bbb" stroke="#222" stroke-width="1"/><ellipse cx="327.6" cy="195.4" rx="1.0" ry="0.8" transform="rotate(-10 327.6 195.4)" fill="#fff" stroke="#222" stroke-width=".5"/>
<path d="M326.6 200.6 L324 207.6" stroke="#222" stroke-width="2.2"/><ellipse cx="323.4" cy="208.8" rx="2.6" ry="1.9" fill="#aaa" stroke="#222" stroke-width=".9"/>
<path d="M49.4 319 l2.6 -1.4 l2.6 1 l.2 3.2 l-2.6 1.6 l-2.8 -1.2 z" fill="#eee" stroke="#222" stroke-width="1.1"/>
<ellipse cx="52" cy="328.8" rx="2.6" ry="2.1" transform="rotate(-10 52 328.8)" fill="#bbb" stroke="#222" stroke-width="1"/><ellipse cx="52" cy="328.8" rx="1.0" ry="0.8" transform="rotate(-10 52 328.8)" fill="#fff" stroke="#222" stroke-width=".5"/>
<path d="M52.2 333.4 L52.4 342" stroke="#222" stroke-width="2.2"/><ellipse cx="52.4" cy="343.4" rx="2.7" ry="2" fill="#aaa" stroke="#222" stroke-width=".9"/>
<ellipse cx="294" cy="261.2" rx="2.7" ry="2.2" transform="rotate(-10 294 261.2)" fill="#bbb" stroke="#222" stroke-width="1"/><ellipse cx="294" cy="261.2" rx="1.1" ry="0.9" transform="rotate(-10 294 261.2)" fill="#fff" stroke="#222" stroke-width=".5"/>
<path d="M292 265 L290 271.6" stroke="#222" stroke-width="2.2"/><ellipse cx="289.4" cy="273" rx="2.7" ry="2" fill="#aaa" stroke="#222" stroke-width=".9"/>
<rect x="309.5" y="65.5" width="43" height="88" stroke="#1c1c1c" fill="none" stroke-linejoin="round" stroke-linecap="round" stroke-width="1.1" fill="#fff"/>
<path d="M318.4 77.4 C317.4 75.4 319 73.6 321 73.4 L336.6 70 C338.6 69.6 340 71 339.4 72.6 C338.8 73.8 337.6 74 336 74 L331.8 75.6 L334.4 84.6 L331.6 85.4 L328.4 77 L321.4 78.6 C320 78.8 319 78.4 318.4 77.4 Z" stroke="#1c1c1c" fill="none" stroke-linejoin="round" stroke-linecap="round" stroke-width="1" fill="#fff"/>
<path d="M331.8 85.6 L336.2 101.4 M334.2 85 L338 100.8 M331.6 88.4 L335.2 87.4 M332.4 91 L336 90.2" stroke="#1c1c1c" fill="none" stroke-linejoin="round" stroke-linecap="round" stroke-width=".8"/>
<path d="M334.6 102.6 C335 100.8 339.4 100 340 101.8 L340.8 106.6 L339.6 107.6 L342.6 124.6 L339.8 125.2 L336.6 108.2 L335.4 107.6 Z" stroke="#1c1c1c" fill="none" stroke-linejoin="round" stroke-linecap="round" stroke-width="1" fill="#fff"/>
<path d="M340.2 125.2 L340.8 130.4 M342 125 L342.4 130.2" stroke="#1c1c1c" fill="none" stroke-linejoin="round" stroke-linecap="round" stroke-width=".7"/>
<path d="M341.6 131.4 L344.2 148.4" stroke="#333" stroke-width="2.7"/><path d="M341.6 131.4 L344.2 148.4" stroke="#bbb" stroke-width=".6"/>
<rect x="13.5" y="393.5" width="160" height="110.5" stroke="#1c1c1c" fill="none" stroke-linejoin="round" stroke-linecap="round" stroke-width="1.1" fill="#fff"/>
<path d="M36.6 400.4 L44.4 402.2 L43.6 417.4 L35.6 414.6 C30.6 412.4 31.4 402 36.6 400.4 Z" stroke="#1c1c1c" fill="none" stroke-linejoin="round" stroke-linecap="round" stroke-width="1" fill="#eee"/>
<ellipse cx="44" cy="409.8" rx="4.6" ry="7.6" transform="rotate(8 44 409.8)" stroke="#1c1c1c" fill="none" stroke-linejoin="round" stroke-linecap="round" stroke-width="1" fill="#fff"/><ellipse cx="44.2" cy="409.8" rx="2.9" ry="5.4" transform="rotate(8 44.2 409.8)" fill="url(#th)" stroke="#222" stroke-width=".8"/>
<path d="M58.6 409.4 L140.6 440.6 C144.6 443 143.6 452.6 137 455 L56 422.8 C52 420.6 53.6 410 58.6 409.4 Z" stroke="#1c1c1c" fill="none" stroke-linejoin="round" stroke-linecap="round" stroke-width="1.2" fill="#fff"/>
<path d="M58.6 409.4 L64.4 411.6 C60.6 414 59.6 422 62 425.2 L56 422.8 C52 420.6 53.6 410 58.6 409.4 Z" fill="url(#th)" stroke="#222" stroke-width=".8"/>
<path d="M128.6 436 L140.6 440.6 C144.6 443 143.6 452.6 137 455 L125.6 450.4 C123.6 446.6 125 439 128.6 436 Z" fill="url(#th)" stroke="#222" stroke-width=".8"/>
<ellipse cx="139.6" cy="447.8" rx="3.6" ry="6.6" transform="rotate(14 139.6 447.8)" fill="#fff" stroke="#222" stroke-width="1"/><ellipse cx="139.8" cy="448" rx="2" ry="4.4" transform="rotate(14 139.8 448)" fill="#999" stroke="#222" stroke-width=".7"/>
<ellipse cx="148.6" cy="455" rx="4.4" ry="10.4" transform="rotate(10 148.6 455)" stroke="#1c1c1c" fill="none" stroke-linejoin="round" stroke-linecap="round" stroke-width="1.1" fill="#fff"/>
<path d="M151 445.6 L160.8 443.8 L167.4 452.8 L164.4 464.6 L155.8 468 L148.4 459.4 Z" stroke="#1c1c1c" fill="none" stroke-linejoin="round" stroke-linecap="round" stroke-width="1.3" fill="#fff"/>
<path d="M151 445.6 L153.2 448.4 L150.6 458 L148.4 459.4 M150.6 458 L156.8 465.4 L155.8 468 M153.2 448.4 L160.6 447" stroke="#1c1c1c" fill="none" stroke-linejoin="round" stroke-linecap="round" stroke-width=".8"/>
<path d="M62.4 464.4 L67.6 466.4 L66.8 474.4 L61.6 472 C59.6 470 60.4 465.4 62.4 464.4 Z" fill="url(#th)" stroke="#1c1c1c" stroke-width=".9"/>
<path d="M80.4 470 L86 472.4 C87.6 474.4 86.8 478.6 84.6 480 L79.4 477.8 Z" fill="url(#th)" stroke="#1c1c1c" stroke-width=".9"/>
<path d="M68 463.6 L73.4 461.6 L79.4 464 L81 471 L79.6 478.4 L74.4 479.6 L68.6 477 L66.8 470 Z" stroke="#1c1c1c" fill="none" stroke-linejoin="round" stroke-linecap="round" stroke-width="1.1" fill="#eee"/>
<path d="M73.4 461.6 L75 468.6 L74.4 479.6 M75 468.6 L81 471 M68 463.6 L69.4 470.6 L68.6 477" stroke="#1c1c1c" fill="none" stroke-linejoin="round" stroke-linecap="round" stroke-width=".8"/>
<path d="M88.6 470.6 L96.6 465.8 L121 474.6 L123.6 484 L119 495.4 L111.6 497.4 L87.6 487.6 L85.8 478.4 Z" stroke="#1c1c1c" fill="none" stroke-linejoin="round" stroke-linecap="round" stroke-width="1.2" fill="#fff"/>
<path d="M88.6 470.6 L113.4 480.6 L121 474.6 M113.4 480.6 L110.6 489.6 L111.6 497.4 M85.8 478.4 L110.6 489.6" stroke="#1c1c1c" fill="none" stroke-linejoin="round" stroke-linecap="round" stroke-width=".9"/>
<ellipse cx="116.6" cy="485.4" rx="3.2" ry="4.6" transform="rotate(15 116.6 485.4)" fill="url(#th)" stroke="#222" stroke-width=".9"/>
<rect x="222.5" y="376.5" width="118" height="85" stroke="#1c1c1c" fill="none" stroke-linejoin="round" stroke-linecap="round" stroke-width="1.1" fill="#fff"/>
<ellipse cx="256.6" cy="390.4" rx="2.7" ry="2.3" transform="rotate(-20 256.6 390.4)" fill="#bbb" stroke="#222" stroke-width="1"/><ellipse cx="256.6" cy="390.4" rx="1.1" ry="0.9" transform="rotate(-20 256.6 390.4)" fill="#fff" stroke="#222" stroke-width=".5"/>
<ellipse cx="283.4" cy="390.4" rx="2.7" ry="2.3" transform="rotate(-20 283.4 390.4)" fill="#bbb" stroke="#222" stroke-width="1"/><ellipse cx="283.4" cy="390.4" rx="1.1" ry="0.9" transform="rotate(-20 283.4 390.4)" fill="#fff" stroke="#222" stroke-width=".5"/>
<ellipse cx="311" cy="390.4" rx="2.7" ry="2.3" transform="rotate(-20 311 390.4)" fill="#bbb" stroke="#222" stroke-width="1"/><ellipse cx="311" cy="390.4" rx="1.1" ry="0.9" transform="rotate(-20 311 390.4)" fill="#fff" stroke="#222" stroke-width=".5"/>
<ellipse cx="282.4" cy="418.4" rx="2.7" ry="2.3" transform="rotate(-20 282.4 418.4)" fill="#bbb" stroke="#222" stroke-width="1"/><ellipse cx="282.4" cy="418.4" rx="1.1" ry="0.9" transform="rotate(-20 282.4 418.4)" fill="#fff" stroke="#222" stroke-width=".5"/>
<path d="M258.40000000000003 393.8 l2.4 -.8 l1.2 3.2 l-2.4 1 z" fill="#555" stroke="#222" stroke-width=".7"/><ellipse cx="261.6" cy="400" rx="3.2" ry="2.7" fill="#eee" stroke="#222" stroke-width="1.1"/>
<path d="M285.2 394.6 l2.4 -.8 l1.2 3.2 l-2.4 1 z" fill="#555" stroke="#222" stroke-width=".7"/><ellipse cx="288.4" cy="400.8" rx="3.2" ry="2.7" fill="#eee" stroke="#222" stroke-width="1.1"/>
<path d="M313.2 394.6 l2.4 -.8 l1.2 3.2 l-2.4 1 z" fill="#555" stroke="#222" stroke-width=".7"/><ellipse cx="316.4" cy="400.8" rx="3.2" ry="2.7" fill="#eee" stroke="#222" stroke-width="1.1"/>
<path d="M284.8 421.8 l2.4 -.8 l1.2 3.2 l-2.4 1 z" fill="#555" stroke="#222" stroke-width=".7"/><ellipse cx="288" cy="428" rx="3.2" ry="2.7" fill="#eee" stroke="#222" stroke-width="1.1"/>
<path d="M193 183.5 L203.8 204.8 M251 180 L251.5 197 M224.2 338.8 L218.8 327.3 M303 87 H309 M44.8 239.7 L55.5 249.3 M48.1 258.3 L59 258.3 M345.2 176.3 L335.7 179 M342.1 198.6 L330.3 195.9 M336.4 211.5 L326.9 203.4 M325.9 270.2 L296.9 261.5 M311 283.4 L292.7 268.3 M40 317.2 L49.4 319.7 M33.6 332.7 L49.4 328.7 M34.2 349.2 L50.5 337.7 M181 367.6 L170.3 364.5 M249 398.6 L254.6 392.6 M254 409.6 L259.6 402.6 M281 394 L281.6 392.6 M283 405.6 L286.4 403 M307 393 L309 391.8 M309 408 L314.4 403.6 M276.4 425.6 L280.6 420.6 M283 436.6 L286.4 431" stroke="#111" stroke-width="1.1" fill="none"/>
<rect x="186.4" y="173.2" width="8.4" height="10.2" fill="#f07878"/><text x="191.1" y="181.6" text-anchor="middle" font-size="9.3" fill="#000">2</text>
<rect x="246.5" y="168.6" width="8.2" height="11" fill="#ffff00"/><text x="251.1" y="177.4" text-anchor="middle" font-size="9.3" fill="#000">8</text>
<rect x="288.2" y="82.3" width="13.8" height="10.5" fill="#ffff00"/><text x="295.6" y="90.8" text-anchor="middle" font-size="9.3" fill="#000">21</text>
<rect x="345.2" y="168.1" width="13.6" height="10.6" fill="#ffff00"/><text x="352.5" y="176.7" text-anchor="middle" font-size="9.3" fill="#000">20</text>
<rect x="342.1" y="194.1" width="13" height="10.6" fill="#ffff00"/><text x="349.1" y="202.7" text-anchor="middle" font-size="9.3" fill="#000">19</text>
<rect x="335.3" y="210.4" width="14" height="10.6" fill="#ffff00"/><text x="342.8" y="219.0" text-anchor="middle" font-size="9.3" fill="#000">17</text>
<rect x="325.9" y="264.9" width="9.1" height="11.9" fill="#ffff00"/><text x="330.9" y="274.1" text-anchor="middle" font-size="9.3" fill="#000">7</text>
<rect x="309" y="282" width="8.9" height="11.9" fill="#ffff00"/><text x="313.9" y="291.2" text-anchor="middle" font-size="9.3" fill="#000">6</text>
<rect x="221" y="338.9" width="8" height="11.8" fill="#ffff00"/><text x="225.5" y="348.1" text-anchor="middle" font-size="9.3" fill="#000">1</text>
<rect x="35.2" y="232" width="9.9" height="10.8" fill="#ffff00"/><text x="40.7" y="240.7" text-anchor="middle" font-size="9.3" fill="#000">4</text>
<rect x="39.1" y="254.1" width="9" height="10.6" fill="#ffff00"/><text x="44.1" y="262.7" text-anchor="middle" font-size="9.3" fill="#000">5</text>
<rect x="26" y="311.2" width="13.8" height="10.7" fill="#ffff00"/><text x="33.4" y="319.9" text-anchor="middle" font-size="9.3" fill="#000">20</text>
<rect x="20.1" y="328.1" width="13.9" height="10.5" fill="#ffff00"/><text x="27.6" y="336.7" text-anchor="middle" font-size="9.3" fill="#000">19</text>
<rect x="20.1" y="347.1" width="13.9" height="11.9" fill="#ffff00"/><text x="27.6" y="356.4" text-anchor="middle" font-size="9.3" fill="#000">18</text>
<rect x="181" y="362.8" width="9" height="11.9" fill="#ffff00"/><text x="186.0" y="372.1" text-anchor="middle" font-size="9.3" fill="#000">3</text>
<rect x="234.8" y="397.6" width="14" height="10.4" fill="#ffff00"/><text x="242.3" y="406.1" text-anchor="middle" font-size="9.3" fill="#000">10</text>
<rect x="248.2" y="409" width="9" height="10.4" fill="#ffff00"/><text x="253.2" y="417.5" text-anchor="middle" font-size="9.3" fill="#000">9</text>
<rect x="267.4" y="393" width="13.4" height="11" fill="#ffff00"/><text x="274.6" y="401.8" text-anchor="middle" font-size="9.3" fill="#000">12</text>
<rect x="271" y="404.4" width="12" height="10.6" fill="#ffff00"/><text x="277.5" y="413.0" text-anchor="middle" font-size="9.3" fill="#000">11</text>
<rect x="293.8" y="392" width="13.4" height="10.8" fill="#ffff00"/><text x="301.0" y="400.7" text-anchor="middle" font-size="9.3" fill="#000">14</text>
<rect x="299" y="407.4" width="13.8" height="11.4" fill="#ffff00"/><text x="306.4" y="416.4" text-anchor="middle" font-size="9.3" fill="#000">13</text>
<rect x="262" y="424" width="14.2" height="10.8" fill="#ffff00"/><text x="269.6" y="432.7" text-anchor="middle" font-size="9.3" fill="#000">16</text>
<rect x="272" y="436" width="14" height="10.8" fill="#ffff00"/><text x="279.5" y="444.7" text-anchor="middle" font-size="9.3" fill="#000">15</text>
</svg>
<svg class="abs" style="left:0;top:20px" width="44" height="174" viewBox="0 20 44 174">
<defs><linearGradient id="bg1" x1="0" y1="0" x2="0" y2="1"><stop offset="0" stop-color="#f2f2f2"/><stop offset=".5" stop-color="#dedede"/><stop offset=".51" stop-color="#d0d0d0"/><stop offset="1" stop-color="#e2e2e2"/></linearGradient><linearGradient id="bg2" x1="0" y1="0" x2="1" y2="0"><stop offset="0" stop-color="#f2f2f2"/><stop offset="1" stop-color="#d8d8d8" stop-opacity="0"/></linearGradient></defs>
<rect x="-1" y="21.5" width="41.5" height="168.5" fill="#fff" stroke="#b4b4b4" stroke-width="1"/>
<rect x="1" y="25" width="36" height="161.5" fill="#a9a9a9"/>
<path d="M26 37.6 L28.7 41 L26 44.4 Z" fill="#eeeeee"/>
<rect x="12" y="34" width="14.5" height="14.5" rx="1" fill="url(#bg1)" stroke="#f4f4f4" stroke-width=".8"/>
<path d="M14.2 41.2 H24 M19.2 36.2 V46.2" stroke="#5e5e5e" stroke-width="2.3"/>
<path d="M12 60.6 L8.9 64 L12 67.4 Z" fill="#eeeeee"/>
<rect x="11.8" y="57" width="14.5" height="14" rx="1" fill="url(#bg1)" stroke="#f4f4f4" stroke-width=".8"/>
<path d="M14.2 64 H24" stroke="#5e5e5e" stroke-width="2.3"/>
<rect x="11.8" y="85.8" width="14.5" height="14.2" rx="1" fill="url(#bg1)" stroke="#f4f4f4" stroke-width=".8"/>
<path d="M19 86.5 V99.5 M12.5 92.9 H25.6" stroke="#f6f6f6" stroke-width="2.4"/>
<rect x="13.4" y="87.3" width="3.6" height="3.6" fill="#777" stroke="#999" stroke-width=".5"/>
<rect x="21.2" y="87.3" width="3.6" height="3.6" fill="#777" stroke="#999" stroke-width=".5"/>
<rect x="13.4" y="95.1" width="3.6" height="3.6" fill="#777" stroke="#999" stroke-width=".5"/>
<rect x="21.2" y="95.1" width="3.6" height="3.6" fill="#777" stroke="#999" stroke-width=".5"/>
<rect x="11.8" y="109" width="14.5" height="14.2" rx="1" fill="url(#bg1)" stroke="#f4f4f4" stroke-width=".8"/>
<rect x="15.4" y="112.6" width="7.4" height="7" fill="#e4e4e4" stroke="#5a5a5a" stroke-width="1.1"/>
<rect x="16" y="161.6" width="12" height="14.8" fill="url(#bg2)"/><path d="M16.2 161.4 V176.6" stroke="#fafafa" stroke-width="1.2"/>
<rect x="10.8" y="161.8" width="4.2" height="4.2" fill="#c4c4c4" stroke="#f8f8f8" stroke-width="1"/>
<rect x="10.8" y="166.8" width="4.2" height="4.2" fill="#c4c4c4" stroke="#f8f8f8" stroke-width="1"/>
<rect x="10.8" y="171.8" width="4.2" height="4.2" fill="#c4c4c4" stroke="#f8f8f8" stroke-width="1"/>
<path d="M18.2 169 H25" stroke="#4a4a4a" stroke-width="2"/><path d="M23.4 165.6 L27.2 169 L23.4 172.4 Z" fill="#4a4a4a"/>
</svg>
<svg class="abs" style="left:1024px;top:478px" width="46" height="54" viewBox="1024 478 46 54" font-family="Liberation Sans, sans-serif">
<circle cx="1038.8" cy="492.4" r="6.2" fill="none" stroke="#00529b" stroke-width="2.7"/>
<path d="M1033.6 497.59999999999997 L1044.0 487.2" stroke="#00529b" stroke-width="2.4" stroke-linecap="round"/>
<circle cx="1055.2" cy="492.4" r="6.2" fill="none" stroke="#00529b" stroke-width="2.7"/>
<path d="M1050.0 487.2 L1060.4 497.59999999999997" stroke="#00529b" stroke-width="2.4" stroke-linecap="round"/>
<circle cx="1038.8" cy="508.6" r="6.2" fill="none" stroke="#00529b" stroke-width="2.7"/>
<path d="M1033.6 503.40000000000003 L1044.0 513.8000000000001" stroke="#00529b" stroke-width="2.4" stroke-linecap="round"/>
<circle cx="1055.2" cy="508.6" r="6.2" fill="none" stroke="#00529b" stroke-width="2.7"/>
<path d="M1050.0 513.8000000000001 L1060.4 503.40000000000003" stroke="#00529b" stroke-width="2.4" stroke-linecap="round"/>
<path d="M1047 483.4 L1049.2 487.6 L1047 491 L1044.8 487.6 Z M1047 517.6 L1049.2 513.4 L1047 510 L1044.8 513.4 Z M1030.4 500.5 L1034.6 498.3 L1038 500.5 L1034.6 502.7 Z M1063.6 500.5 L1059.4 498.3 L1056 500.5 L1059.4 502.7 Z" fill="#00529b"/>
<text x="1029.8" y="528.7" font-size="10.2" font-weight="bold" fill="#00529b" textLength="34.8" lengthAdjust="spacingAndGlyphs">Perkins</text>
<circle cx="1065.2" cy="523" r=".8" fill="none" stroke="#00529b" stroke-width=".4"/>
</svg>
</body></html>
